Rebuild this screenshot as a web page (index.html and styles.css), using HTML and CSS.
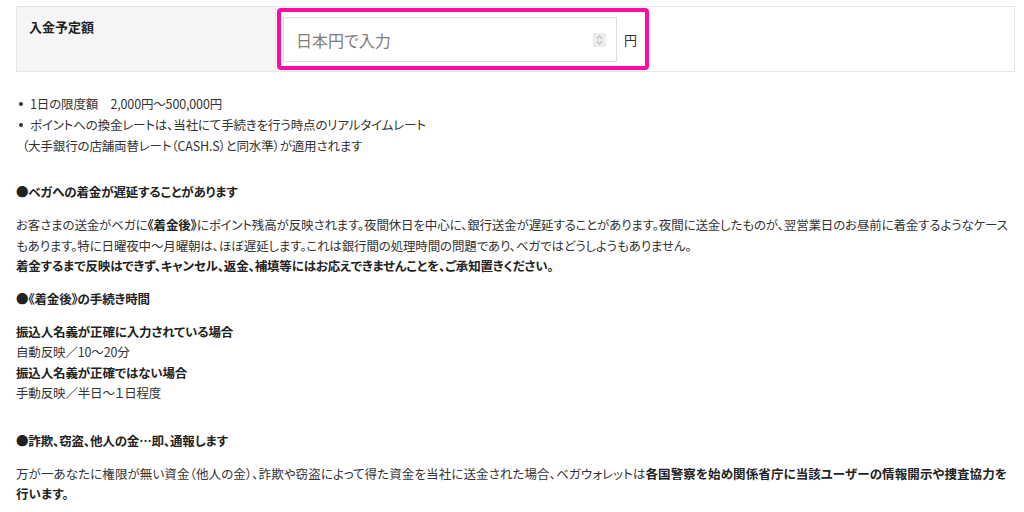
FILE: index.html
```html
<!DOCTYPE html>
<html lang="ja">
<head>
    <meta charset="UTF-8">
    <meta name="viewport" content="width=device-width, initial-scale=1.0">
    <title>入金予定額</title>
    <link rel="stylesheet" href="styles.css">
</head>
<body>

    <!-- Amount row -->
    <div class="form-row">
        <div class="form-label">入金予定額</div>
        <div class="form-value">
            <div class="highlight">
                <div class="field">
                    <span class="placeholder">日本円で入力</span>
                    <span class="spinner">
                        <svg width="13" height="14" viewBox="0 0 13 14">
                            <rect x="0" y="0" width="13" height="14" rx="1" fill="#ececec"/>
                            <path d="M4 5.5 L6.5 3.2 L9 5.5" fill="none" stroke="#9a9a9a" stroke-width="1"/>
                            <path d="M4 8.5 L6.5 10.8 L9 8.5" fill="none" stroke="#9a9a9a" stroke-width="1"/>
                        </svg>
                    </span>
                </div>
                <span class="unit">円</span>
            </div>
        </div>
    </div>

    <ul class="notes">
        <li>1日の限度額　2,000円～500,000円</li>
        <li>ポイントへの換金レートは、当社にて手続きを行う時点のリアルタイムレート<br><span class="pull">（大手銀行の店舗両替レート（CASH.S）と同水準）が適用されます</span></li>
    </ul>

    <h3 class="section-title first">●ベガへの着金が遅延することがあります</h3>
    <p class="text">お客さまの送金がベガに<b>《着金後》</b>にポイント残高が反映されます。夜間休日を中心に、銀行送金が遅延することがあります。夜間に送金したものが、翌営業日のお昼前に着金するようなケース<br>もあります。特に日曜夜中～月曜朝は、ほぼ遅延します。これは銀行間の処理時間の問題であり、ベガではどうしようもありません。<br>
        <b>着金するまで反映はできず、キャンセル、返金、補填等にはお応えできませんことを、ご承知置きください。</b></p>

    <h3 class="section-title">●《着金後》の手続き時間</h3>
    <p class="text times">
        <b>振込人名義が正確に入力されている場合</b><br>
        自動反映／10～20分<br>
        <b>振込人名義が正確ではない場合</b><br>
        手動反映／半日～１日程度
    </p>

    <h3 class="section-title spaced">●詐欺、窃盗、他人の金…即、通報します</h3>
    <p class="text wide">万が一あなたに権限が無い資金（他人の金）、詐欺や窃盗によって得た資金を当社に送金された場合、ベガウォレットは<b>各国警察を始め関係省庁に当該ユーザーの情報開示や捜査協力を<br>行います。</b></p>

</body>
</html>
```

FILE: styles.css
```css
* {
    margin: 0;
    padding: 0;
    box-sizing: border-box;
}

body {
    padding: 6px 4px 0 16px;
    font-family: "Noto Sans CJK JP", "Noto Sans", sans-serif;
    font-size: 12.5px;
    font-feature-settings: "palt";
    letter-spacing: -0.15px;
    color: #333;
    background: #fff;
}

b {
    color: #222;
}

/* amount row */
.form-row {
    display: flex;
    border: 1px solid #e6e6e6;
    height: 66px;
    margin-right: 5px;
    letter-spacing: 0;
}

.form-label {
    width: 259px;
    background: #f5f5f5;
    border-right: 1px solid #e6e6e6;
    padding: 10px 12px;
    font-weight: bold;
    font-size: 13px;
    color: #222;
}

.form-value {
    flex: 1;
    padding: 1px 0 0 1px;
}

.highlight {
    display: flex;
    align-items: center;
    width: 372px;
    height: 62px;
    border: 4px solid #ff0aa5;
    border-radius: 4px;
    padding: 1px 0 0 2px;
}

.field {
    display: flex;
    align-items: center;
    justify-content: space-between;
    width: 334px;
    height: 45px;
    border: 1px solid #dedede;
    background: #fff;
    padding: 0 10px 0 12px;
}

.placeholder {
    font-size: 16px;
    color: #7d7d7d;
}

.spinner svg {
    display: block;
}

.unit {
    margin-left: 7px;
    font-size: 13px;
    color: #333;
}

/* notes list */
.notes {
    list-style: none;
    margin-top: 21px;
    line-height: 21px;
}

.notes li {
    position: relative;
    padding-left: 14px;
}

.notes li::before {
    content: "";
    position: absolute;
    left: 3px;
    top: 9px;
    width: 4px;
    height: 4px;
    border-radius: 50%;
    background: #333;
}

.notes .pull {
    margin-left: -8px;
}

.section-title {
    font-size: 12.5px;
    font-weight: bold;
    color: #222;
    margin-top: 11px;
    line-height: 21px;
}

.section-title.first {
    margin-top: 25px;
}

.section-title.spaced {
    margin-top: 26px;
}

.text {
    margin-top: 13px;
    line-height: 20.5px;
}

.text.wide {
    letter-spacing: 0.1px;
}
```
